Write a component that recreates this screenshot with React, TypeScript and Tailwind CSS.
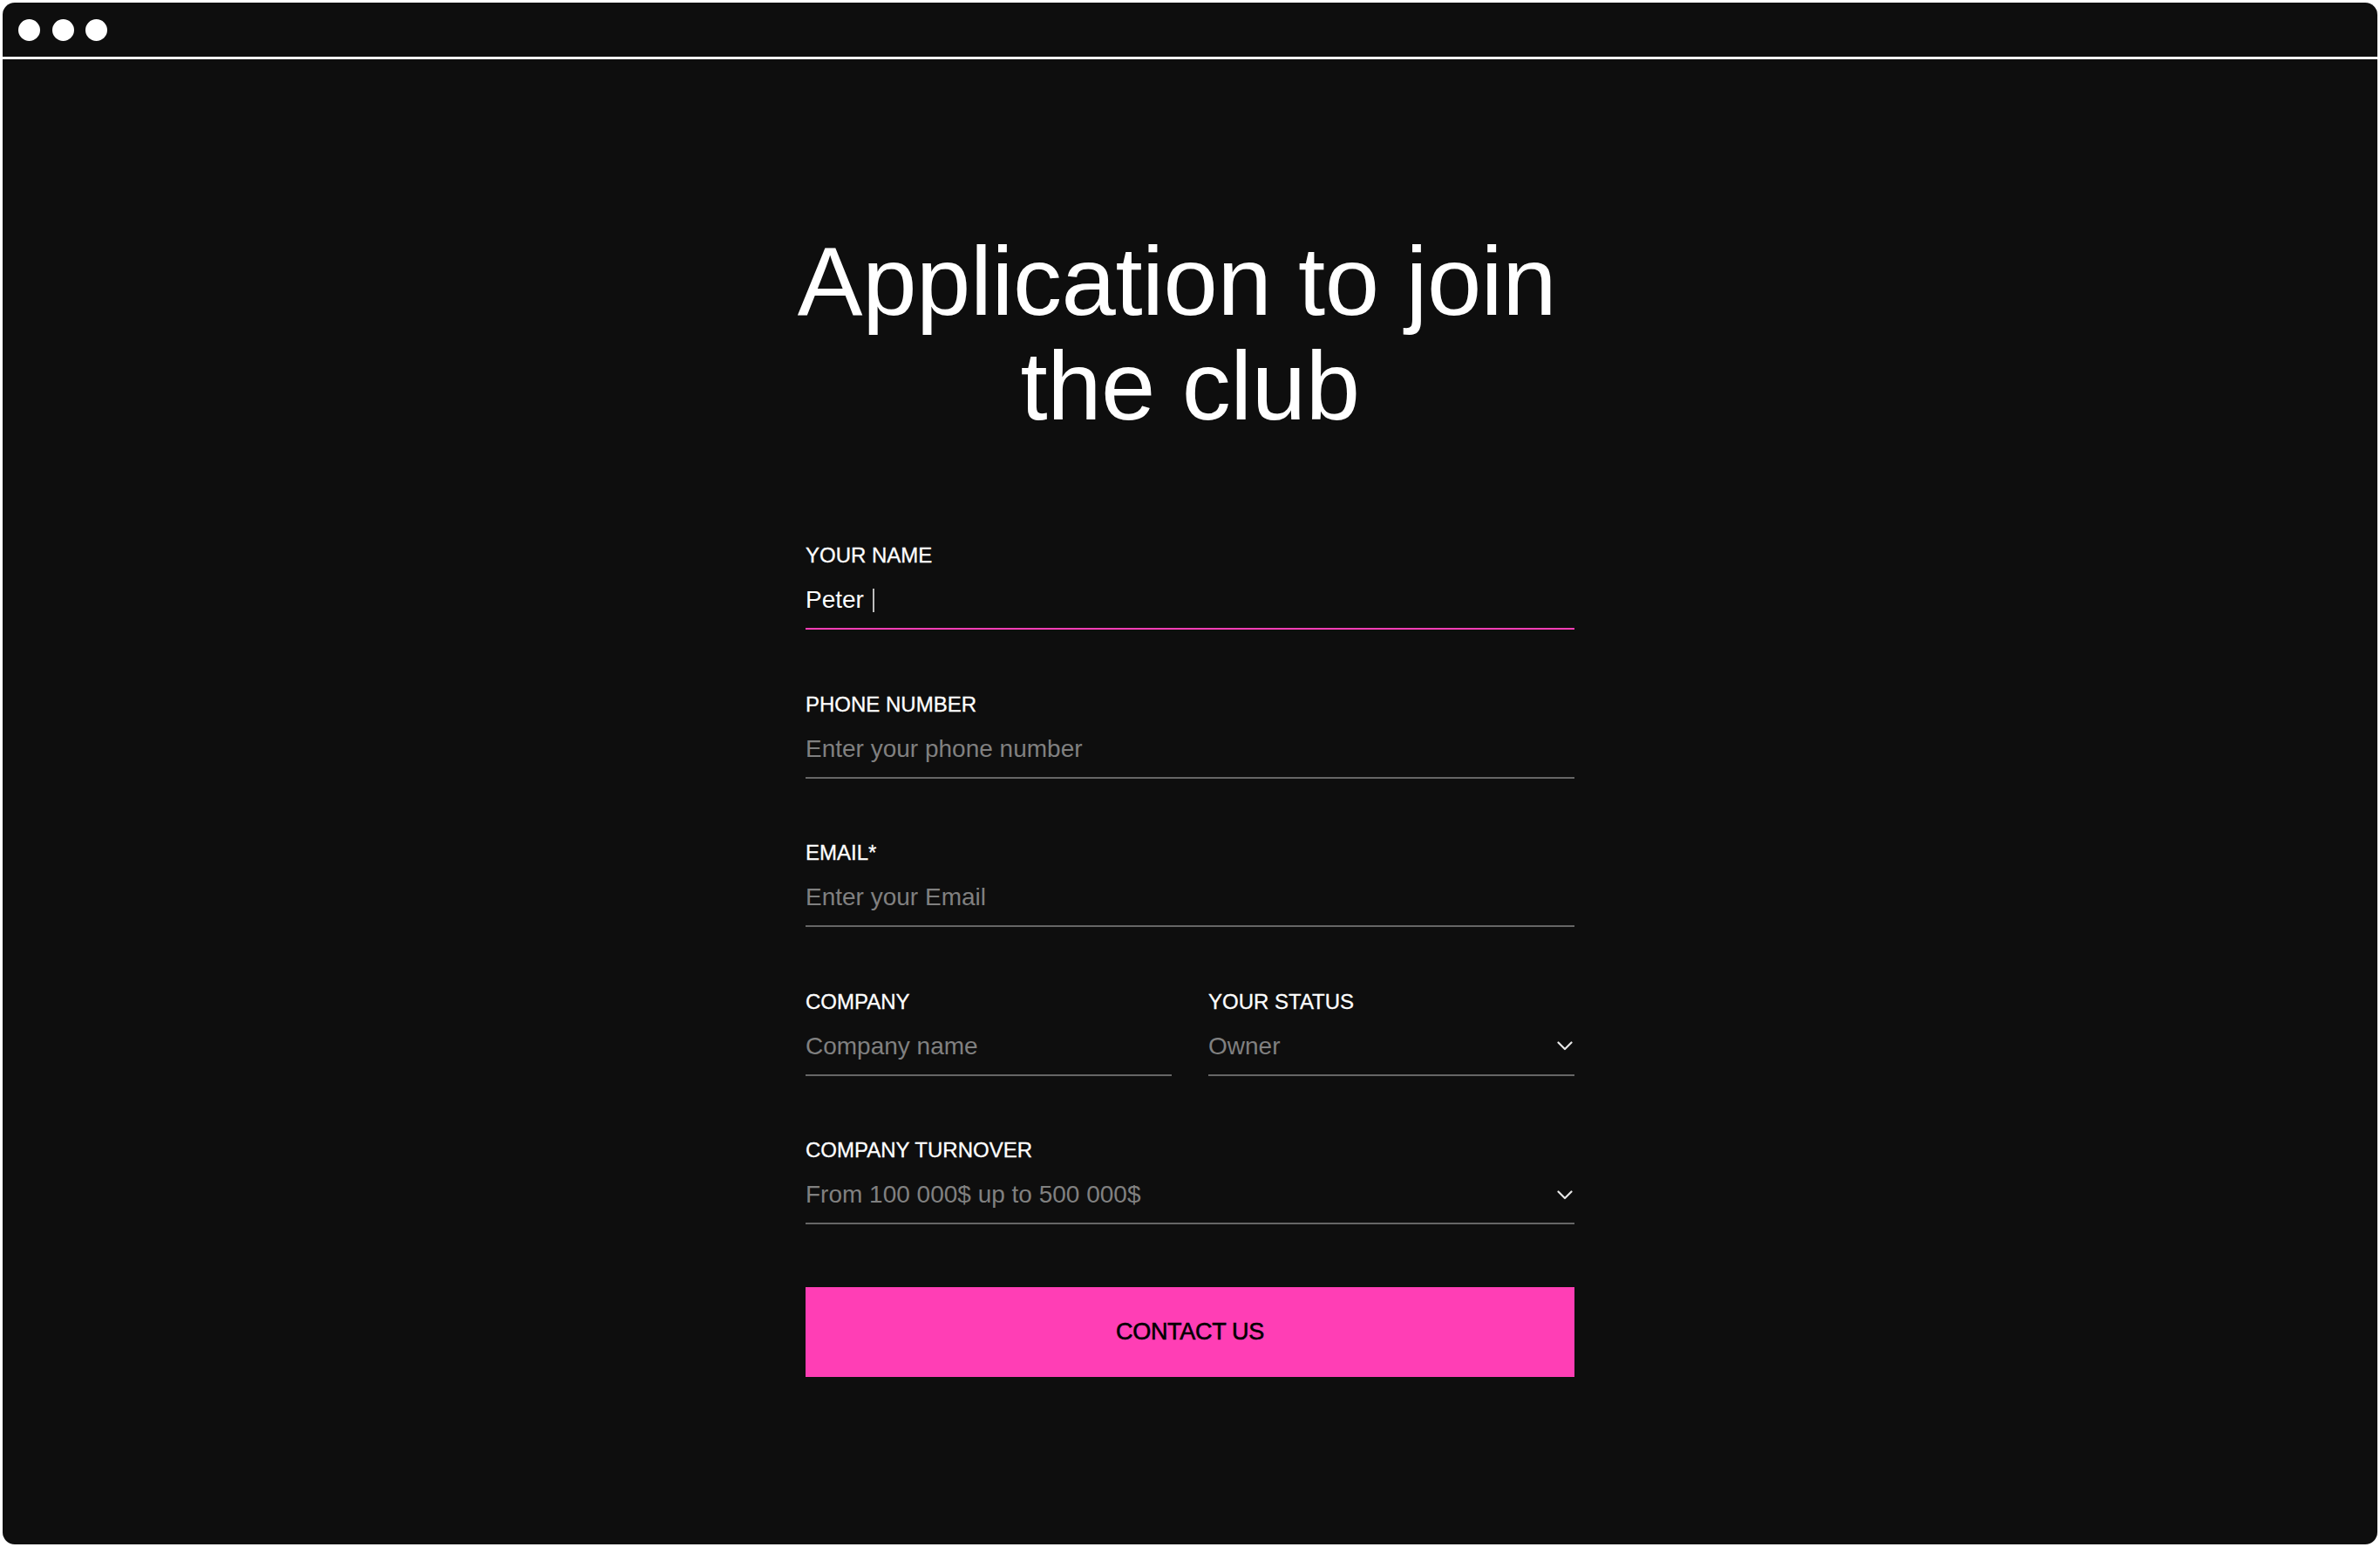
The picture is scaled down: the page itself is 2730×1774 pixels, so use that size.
import React from "react";

const font = { fontFamily: '"Liberation Sans", Arial, Helvetica, sans-serif' };

function Chevron() {
  return (
    <svg width="18" height="11" viewBox="0 0 18 11" fill="none" className="mr-[2px]">
      <polyline points="1.5,1.5 9,9 16.5,1.5" stroke="#e6e6e6" strokeWidth="2.2" strokeLinecap="round" strokeLinejoin="round" />
    </svg>
  );
}

function Field({
  label,
  children,
  active = false,
}: {
  label: string;
  children: React.ReactNode;
  active?: boolean;
}) {
  return (
    <div className="flex flex-col">
      <div className="text-[24px] leading-[32px] text-white [-webkit-text-stroke:0.3px_white]">{label}</div>
      <div
        className={
          "mt-[15px] h-[54px] pb-[12px] border-b-2 " +
          (active ? "border-[#ff3eb5]" : "border-[#666666]")
        }
      >
        <div className="h-[40px] flex items-center justify-between text-[28px] leading-[40px]">
          {children}
        </div>
      </div>
    </div>
  );
}

export default function App() {
  return (
    <div className="w-full h-[1774px] bg-white p-[3px]" style={font}>
      <div className="w-full h-[1768px] rounded-[14px] bg-[#0e0e0e] overflow-hidden flex flex-col">
        <div className="h-[65px] shrink-0 flex items-center pl-[18px] gap-[13.5px] border-b-[3px] border-white">
          <div className="w-[25px] h-[25px] rounded-full bg-white" />
          <div className="w-[25px] h-[25px] rounded-full bg-white" />
          <div className="w-[25px] h-[25px] rounded-full bg-white" />
        </div>
        <div className="flex-1 flex flex-col items-center pt-[195px]">
          <h1 className="text-[112px] leading-[120px] text-white text-center font-normal tracking-[-0.4px]">
            <span className="inline-block pr-[30px]">Application to join</span>
            <br />
            the club
          </h1>
          <form className="w-[882px] mt-[118px] flex flex-col gap-[69.5px]" onSubmit={(e) => e.preventDefault()}>
            <Field label="YOUR NAME" active>
              <div className="flex items-center">
                <span className="text-white">Peter</span>
                <span className="ml-[10px] w-[2px] h-[27px] bg-[#bdbdbd]" />
              </div>
            </Field>
            <Field label="PHONE NUMBER">
              <span className="text-[#808080]">Enter your phone number</span>
            </Field>
            <Field label="EMAIL*">
              <span className="text-[#808080]">Enter your Email</span>
            </Field>
            <div className="grid grid-cols-2 gap-[42px]">
              <Field label="COMPANY">
                <span className="text-[#808080]">Company name</span>
              </Field>
              <Field label="YOUR STATUS">
                <span className="text-[#808080]">Owner</span>
                <Chevron />
              </Field>
            </div>
            <Field label="COMPANY TURNOVER">
              <span className="text-[#808080]">From 100 000$ up to 500 000$</span>
              <Chevron />
            </Field>
          </form>
          <button
            type="button"
            className="w-[882px] h-[103px] mt-[72px] bg-[#ff3eb5] text-black text-[27px] leading-none flex items-center justify-center tracking-[-0.3px] [-webkit-text-stroke:0.6px_black]"
          >
            CONTACT US
          </button>
        </div>
      </div>
    </div>
  );
}
